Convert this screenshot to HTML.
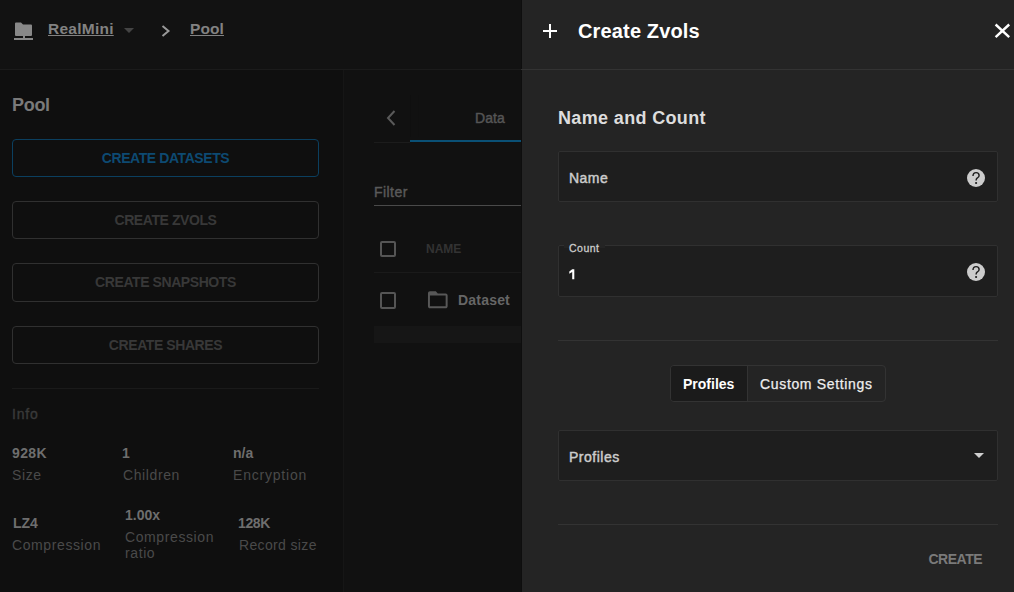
<!DOCTYPE html>
<html><head><meta charset="utf-8">
<style>
*{box-sizing:border-box;margin:0;padding:0}
html,body{width:1014px;height:592px;overflow:hidden;background:#111111;font-family:"Liberation Sans",sans-serif}
.abs{position:absolute;white-space:nowrap}
#hdr{position:absolute;left:0;top:0;width:521px;height:70px;background:#121212;border-bottom:1px solid #1b1b1b}
#side{position:absolute;left:0;top:70px;width:344px;height:522px;background:#0f0f0f;border-right:1px solid #161616}
.btn{position:absolute;left:12px;width:307px;height:38px;border:1px solid #303030;border-radius:4px;text-align:center;font-weight:bold;font-size:14px;line-height:36px;color:#383838;letter-spacing:-0.42px}
#main{position:absolute;left:344px;top:70px;width:177px;height:522px}
#main .abs{margin-left:-344px;margin-top:-70px}
.v{font-size:14px;font-weight:bold;color:#6e6e6e}
.l{font-size:14px;color:#4a4a4a;letter-spacing:0.6px}
.cb{width:16px;height:16px;border:2px solid #555;border-radius:2px}
.fld{position:absolute;left:37px;width:440px;background:#1e1e1e;border:1px solid #303030;border-radius:2px}
.help{position:absolute;width:18px;height:18px;border-radius:50%;background:#ccc;color:#1e1e1e;font-size:14px;font-weight:bold;text-align:center;line-height:18px}
#panel{position:absolute;left:521px;top:0;width:493px;height:592px;background:linear-gradient(to right,#0e0e0e 1px,#242424 1px)}
</style></head><body>
<div id="hdr">
  <svg class="abs" style="left:14px;top:22px" width="20" height="19" viewBox="0 0 20 19">
    <path d="M1 1.5 Q1 0.5 2 0.5 H7 L9 2.5 H17 Q18 2.5 18 3.5 V13 Q18 14 17 14 H2 Q1 14 1 13 Z" fill="#888"/>
    <rect x="9" y="14" width="2" height="2" fill="#888"/>
    <rect x="0" y="16" width="19" height="2" fill="#888"/>
  </svg>
  <div class="abs" style="left:48px;top:19.5px;font-size:15.5px;font-weight:bold;color:#828282;letter-spacing:0.25px;text-decoration:underline">RealMini</div>
  <svg class="abs" style="left:124px;top:28px" width="10" height="5" viewBox="0 0 10 5"><path d="M0 0 H10 L5 5Z" fill="#444"/></svg>
  <svg class="abs" style="left:161px;top:25px" width="10" height="12" viewBox="0 0 10 12"><path d="M1.5 1 L7.5 6 L1.5 11" fill="none" stroke="#999" stroke-width="2"/></svg>
  <div class="abs" style="left:190px;top:19.5px;font-size:15.5px;font-weight:bold;color:#828282;letter-spacing:0.1px;text-decoration:underline">Pool</div>
</div>
<div id="side">
  <div class="abs" style="left:12px;top:25px;font-size:18px;font-weight:bold;color:#7a7a7a;letter-spacing:-0.3px">Pool</div>
  <div class="btn" style="top:69px;border-color:#0b3f5f;color:#0d4a72">CREATE DATASETS</div>
  <div class="btn" style="top:131px">CREATE ZVOLS</div>
  <div class="btn" style="top:193px;height:39px;line-height:37px">CREATE SNAPSHOTS</div>
  <div class="btn" style="top:256px">CREATE SHARES</div>
  <div class="abs" style="left:12px;top:318px;width:307px;height:1px;background:#1a1a1a"></div>
  <div class="abs" style="left:12px;top:336px;font-size:14px;color:#3a3a3a;-webkit-text-stroke:0.35px #3a3a3a;letter-spacing:0.8px">Info</div>
  <div class="abs v" style="left:12px;top:375px;letter-spacing:0.4px">928K</div>
  <div class="abs l" style="left:12px;top:397px">Size</div>
  <div class="abs v" style="left:122px;top:375px">1</div>
  <div class="abs l" style="left:123px;top:397px">Children</div>
  <div class="abs v" style="left:233px;top:375px">n/a</div>
  <div class="abs l" style="left:233px;top:397px;letter-spacing:0.8px">Encryption</div>
  <div class="abs v" style="left:13px;top:445px">LZ4</div>
  <div class="abs l" style="left:12px;top:467px">Compression</div>
  <div class="abs v" style="left:125px;top:437px">1.00x</div>
  <div class="abs l" style="left:125px;top:459px;line-height:16px">Compression<br>ratio</div>
  <div class="abs v" style="left:238px;top:445px;letter-spacing:-0.4px">128K</div>
  <div class="abs l" style="left:239px;top:467px;letter-spacing:0.35px">Record size</div>
</div>
<div id="main">
  <svg class="abs" style="left:386px;top:110px" width="10" height="16" viewBox="0 0 10 16"><path d="M8.5 1 L2 8 L8.5 15" fill="none" stroke="#5a5a5a" stroke-width="2"/></svg>
  <div class="abs" style="left:410px;top:95px;width:1px;height:42px;background:#0f0f0f"></div>
  <div class="abs" style="left:418px;top:95px;width:1px;height:42px;background:#101010"></div>
  <div class="abs" style="left:374px;top:142px;width:36px;height:1px;background:#1c1c1c"></div>
  <div class="abs" style="left:410px;top:140px;width:111px;height:2px;background:#0a5075"></div>
  <div class="abs" style="left:475px;top:110px;font-size:14px;color:#555;-webkit-text-stroke:0.45px #555;letter-spacing:0.1px">Data</div>
  <div class="abs" style="left:374px;top:184px;font-size:14px;color:#5a5a5a;-webkit-text-stroke:0.4px #5a5a5a;letter-spacing:0.45px">Filter</div>
  <div class="abs" style="left:374px;top:205px;width:147px;height:1px;background:#4a4a4a"></div>
  <div class="abs cb" style="left:380px;top:241px"></div>
  <div class="abs" style="left:426px;top:242px;font-size:12px;font-weight:bold;color:#333">NAME</div>
  <div class="abs" style="left:374px;top:272px;width:147px;height:1px;background:#1a1a1a"></div>
  <div class="abs cb" style="left:380px;top:292px;height:17px"></div>
  <svg class="abs" style="left:426px;top:286.8px" width="23.6" height="25.5" viewBox="0 0 24 24" preserveAspectRatio="none"><path d="M20 6h-8l-2-2H4c-1.1 0-1.99.9-1.99 2L2 18c0 1.1.9 2 2 2h16c1.1 0 2-.9 2-2V8c0-1.1-.9-2-2-2zm0 12H4V8h16v10z" fill="#585858"/></svg>
  <div class="abs" style="left:458px;top:292px;font-size:14px;font-weight:bold;color:#666;letter-spacing:0.2px">Dataset</div>
  <div class="abs" style="left:374px;top:326px;width:147px;height:17px;background:#161616"></div>
</div>
<div id="panel">
  <svg class="abs" style="left:21px;top:23px" width="16" height="16" viewBox="0 0 16 16"><path d="M8 1 V15 M1 8 H15" stroke="#fff" stroke-width="2"/></svg>
  <div class="abs" style="left:57px;top:20px;font-size:20px;font-weight:bold;color:#fff;letter-spacing:0.15px">Create Zvols</div>
  <svg class="abs" style="left:473px;top:23px" width="17" height="16" viewBox="0 0 17 16"><path d="M1.6 1.5 L15.2 14.2 M15.2 1.5 L1.6 14.2" stroke="#fff" stroke-width="2.4"/></svg>
  <div class="abs" style="left:0;top:69px;width:493px;height:1px;background:#333"></div>
  <div class="abs" style="left:37px;top:108px;font-size:18px;font-weight:bold;color:#ddd;letter-spacing:0.35px">Name and Count</div>
  <div class="fld" style="top:151px;height:51px"></div>
  <div class="abs" style="left:48px;top:169.5px;font-size:14px;color:#ccc;-webkit-text-stroke:0.45px #ccc;letter-spacing:0.45px">Name</div>
  <svg class="abs" style="left:446px;top:169px" width="18" height="18" viewBox="0 0 18 18"><circle cx="9" cy="9" r="9" fill="#ccc"/><path d="M6 7.1 C6 5 7.3 3.6 9.1 3.6 C10.9 3.6 12.1 4.8 12.1 6.4 C12.1 8 10.9 8.5 10.1 9.2 C9.3 9.8 9.1 10.3 9.1 11.6" fill="none" stroke="#1e1e1e" stroke-width="1.45"/><circle cx="9.1" cy="14" r="1.1" fill="#1e1e1e"/></svg>
  <div class="fld" style="top:245px;height:52px"></div>
  <div class="abs" style="left:43px;top:240px;width:41px;height:8px;background:#242424"></div>
  <div class="abs" style="left:48px;top:242px;font-size:10.5px;color:#ccc;-webkit-text-stroke:0.3px #ccc;letter-spacing:0.5px">Count</div>
  <svg class="abs" style="left:47px;top:269px" width="8" height="11" viewBox="0 0 8 11"><path d="M4.2 0.3 H6.3 V10.3 H4.2 V3 L1.3 4.7 V2.6 Z" fill="#fff"/></svg>
  <svg class="abs" style="left:446px;top:263px" width="18" height="18" viewBox="0 0 18 18"><circle cx="9" cy="9" r="9" fill="#ccc"/><path d="M6 7.1 C6 5 7.3 3.6 9.1 3.6 C10.9 3.6 12.1 4.8 12.1 6.4 C12.1 8 10.9 8.5 10.1 9.2 C9.3 9.8 9.1 10.3 9.1 11.6" fill="none" stroke="#1e1e1e" stroke-width="1.45"/><circle cx="9.1" cy="14" r="1.1" fill="#1e1e1e"/></svg>
  <div class="abs" style="left:37px;top:340px;width:440px;height:1px;background:#333"></div>
  <div class="abs" style="left:149px;top:365px;width:216px;height:37px;border:1px solid #333;border-radius:4px;overflow:hidden">
    <div class="abs" style="left:0;top:0;width:77px;height:35px;background:#1b1b1b;border-right:1px solid #333"></div>
    <div class="abs" style="left:12px;top:9.5px;font-size:14px;font-weight:bold;color:#fff">Profiles</div>
    <div class="abs" style="left:89px;top:9.5px;font-size:14px;color:#eee;-webkit-text-stroke:0.25px #eee;letter-spacing:0.66px">Custom Settings</div>
  </div>
  <div class="fld" style="top:430px;height:51px"></div>
  <div class="abs" style="left:48px;top:448.5px;font-size:14px;color:#ccc;-webkit-text-stroke:0.45px #ccc;letter-spacing:0.5px">Profiles</div>
  <svg class="abs" style="left:453px;top:453px" width="10" height="5" viewBox="0 0 10 5"><path d="M0 0 H10 L5 5Z" fill="#d0d0d0"/></svg>
  <div class="abs" style="left:37px;top:524px;width:440px;height:1px;background:#333"></div>
  <div class="abs" style="left:407.5px;top:551px;font-size:14px;font-weight:bold;color:#7a7a7a;letter-spacing:-0.5px">CREATE</div>
</div>
</body></html>
